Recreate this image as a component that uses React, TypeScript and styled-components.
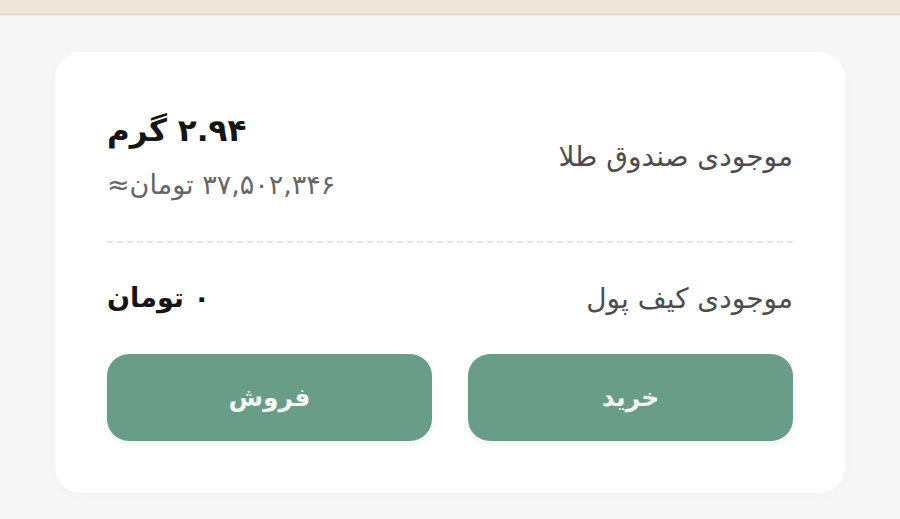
import React from 'react';
import styled, {createGlobalStyle} from "styled-components";

const GlobalStyle = createGlobalStyle`
  html, body {
    margin: 0;
    padding: 0;
    background: #f7f7f7;
    font-family: "DejaVu Sans", "Noto Sans", sans-serif;
  }
`

export default function App() {
    return (
        <>
            <GlobalStyle/>
            <PageStyled>
                <TopBarStyled/>
                <CardStyled dir="rtl">
                    <RowStyled>
                        <LabelStyled>موجودی صندوق طلا</LabelStyled>
                        <ValueColStyled>
                            <ValueStyled>۲.۹۴ گرم</ValueStyled>
                            <SubValueStyled>۳۷,۵۰۲,۳۴۶ تومان≈</SubValueStyled>
                        </ValueColStyled>
                    </RowStyled>

                    <DividerStyled/>

                    <RowStyled $compact>
                        <LabelStyled>موجودی کیف پول</LabelStyled>
                        <ValueStyled $size={27}>۰ تومان</ValueStyled>
                    </RowStyled>

                    <ButtonsStyled>
                        <ButtonStyled>خرید</ButtonStyled>
                        <ButtonStyled>فروش</ButtonStyled>
                    </ButtonsStyled>
                </CardStyled>
            </PageStyled>
        </>
    );
}

const PageStyled = styled.div`
  width: 900px;
  height: 519px;
  overflow: hidden;
  background: #f7f7f7;
`

const TopBarStyled = styled.div`
  height: 14px;
  background: #f0e5db;
  border-bottom: 1px solid #dcd2c8;
  box-shadow: 0 1px 0 #fbeef4;
`

const CardStyled = styled.div`
  margin: 37px 55px 0;
  height: 441px;
  box-sizing: border-box;
  padding: 58px 52px 53px;
  background: #ffffff;
  border-radius: 26px;
  box-shadow: 0 2px 10px rgba(0, 0, 0, 0.025);
  display: flex;
  flex-direction: column;
`

const RowStyled = styled.div<{ $compact?: boolean }>`
  display: flex;
  align-items: center;
  justify-content: space-between;
  height: ${p => p.$compact ? '40px' : '93px'};
`

const LabelStyled = styled.div`
  font-size: 28px;
  color: #4d4d4d;
`

const ValueColStyled = styled.div`
  display: flex;
  flex-direction: column;
  align-items: flex-end;
  gap: 17px;
`

const ValueStyled = styled.div<{ $size?: number }>`
  font-size: ${p => p.$size ?? 31}px;
  font-weight: bold;
  color: #151515;
  line-height: 40px;
`

const SubValueStyled = styled.div`
  font-size: 27px;
  color: #666666;
  line-height: 36px;
`

const DividerStyled = styled.div`
  margin: 38px 0 35px;
  border-top: 2px dashed #e4e4e4;
`

const ButtonsStyled = styled.div`
  margin-top: 36px;
  display: grid;
  grid-template-columns: 1fr 1fr;
  gap: 36px;
`

const ButtonStyled = styled.button`
  height: 87px;
  border: none;
  border-radius: 22px;
  background: #6a9d88;
  color: #f3f7f5;
  font-family: "DejaVu Sans", sans-serif;
  font-size: 25px;
  font-weight: bold;
  cursor: pointer;
  box-shadow: 0 3px 6px rgba(80, 160, 140, 0.12);
`
